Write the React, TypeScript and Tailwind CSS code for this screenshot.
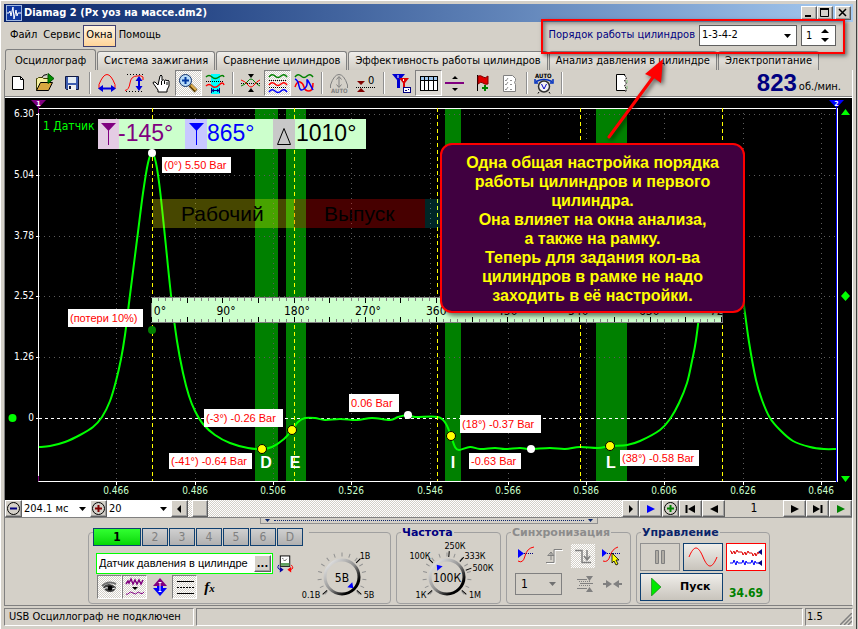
import { useState } from "react";
import type { ReactNode } from "react";
import clsx from "clsx";

const HATCH =
  "bg-[repeating-conic-gradient(#ffffff_0_25%,#d4d0c8_0_50%)] bg-[length:2px_2px]";
const RAISED =
  "border border-t-white border-l-white border-b-[#606060] border-r-[#606060] bg-[#d4d0c8] shadow-[inset_-1px_-1px_0_#a0a0a0]";
const SUNKEN =
  "border border-t-[#808080] border-l-[#808080] border-b-white border-r-white";

// ---------- data ----------

const TABS = [
  "Осциллограф",
  "Система зажигания",
  "Сравнение цилиндров",
  "Эффективность работы цилиндров",
  "Анализ давления в цилиндре",
  "Электропитание",
];

const MENU = ["Файл", "Сервис", "Окна", "Помощь"];

const PRESSURE: [number, number][] = [
  [39, 447], [50, 446], [65, 442], [80, 435], [93, 427], [102, 417], [110, 401], [116, 381],
  [121, 359], [125, 335], [130, 295], [138, 232], [143, 193], [148, 163], [152, 153], [156, 163],
  [160, 190], [165, 237], [171, 295], [177, 341], [183, 373], [189, 396], [195, 411], [203, 424],
  [215, 435], [230, 443], [248, 448], [262, 449], [272, 447], [284, 439], [292, 430], [298, 422],
  [305, 418], [315, 418], [325, 420], [340, 419], [357, 420], [372, 418], [390, 420], [398, 417],
  [408, 415], [415, 417], [438, 417], [446, 424], [451, 436], [455, 447], [459, 450], [470, 447],
  [480, 449], [495, 448], [505, 449], [520, 448], [530, 449], [550, 448], [565, 449], [580, 447],
  [598, 448], [610, 446], [627, 445], [640, 441], [660, 430], [670, 419], [679, 403], [687, 383],
  [692, 361], [696, 340], [701, 300], [709, 236], [718, 163], [722, 153], [726, 163], [736, 237],
  [744, 305], [749, 342], [756, 380], [762, 400], [770, 418], [780, 430], [793, 441], [810, 447],
  [824, 449], [836, 449],
];

const X_TICKS = [
  [116, "0.466"], [195, "0.486"], [273, "0.506"], [351, "0.526"], [430, "0.546"],
  [508, "0.566"], [586, "0.586"], [664, "0.606"], [743, "0.626"], [821, "0.646"],
] as const;

const Y_TICKS = [
  [114, "6.30"], [175, "5.04"], [236, "3.78"], [296, "2.52"], [357, "1.26"], [418, "0"],
] as const;

const BANDS = [[255, 23], [286, 20], [445, 16], [596, 31]];

const NOTES = [
  { x: 162, y: 157, w: 69, h: 16, text: "(0°) 5.50 Bar" },
  { x: 68, y: 309, w: 75, h: 18, text: "(потери 10%)" },
  { x: 204, y: 409, w: 79, h: 18, text: "(-3°) -0.26 Bar" },
  { x: 169, y: 453, w: 83, h: 16, text: "(-41°) -0.64 Bar" },
  { x: 349, y: 394, w: 50, h: 18, text: "0.06 Bar" },
  { x: 460, y: 415, w: 81, h: 18, text: "(18°) -0.37 Bar" },
  { x: 469, y: 453, w: 52, h: 16, text: "-0.63 Bar" },
  { x: 620, y: 450, w: 79, h: 16, text: "(38°) -0.58 Bar" },
];

function smooth(p: [number, number][]) {
  let d = `M${p[0][0]} ${p[0][1]}`;
  for (let i = 0; i < p.length - 1; i++) {
    const a = p[i - 1] ?? p[i];
    const b = p[i];
    const c = p[i + 1];
    const e = p[i + 2] ?? c;
    d += `C${b[0] + (c[0] - a[0]) / 6} ${b[1] + (c[1] - a[1]) / 6} ${c[0] - (e[0] - b[0]) / 6} ${c[1] - (e[1] - b[1]) / 6} ${c[0]} ${c[1]}`;
  }
  return d;
}

// ---------- toolbar ----------

function Tool({ label, mode, children }: { label: string; mode?: "hatch" | "light"; children: ReactNode }) {
  return (
    <button
      aria-label={label}
      className={clsx("h-[26px] w-[27px] shrink-0", mode && SUNKEN, mode === "hatch" && HATCH, mode === "light" && "bg-[#dedbd5]")}
    >
      <svg viewBox="0 0 27 26" className={clsx("block h-[26px] w-[27px]", mode && "-m-px")} fill="none">
        {children}
      </svg>
    </button>
  );
}

function Sep() {
  return (
    <div className="flex w-2 shrink-0 justify-center py-0.5">
      <div className="w-0.5 border-l border-[#909090] bg-white" />
    </div>
  );
}

function Toolbar() {
  return (
    <div className="flex h-[26px] items-stretch">
      <Tool label="Новый">
        <path d="M7.500 6.500h8l3 3v10h-11z" fill="#fff" stroke="#000" />
        <path d="M15.500 6.500v3h3" stroke="#000" />
      </Tool>
      <Tool label="Открыть">
        <path d="M4.500 20.500v-12h1l1-1h4l1 1h6v4" fill="#f4f0a0" stroke="#404000" />
        <path d="M4.500 20.500l4-8h12l-4 8z" fill="#d8a840" stroke="#000" />
        <path d="M16 3.500v10l6-5z" fill="#009000" stroke="#005000" />
        <path d="M10 7.500q1-3 5-3" stroke="#000" />
      </Tool>
      <Tool label="Сохранить">
        <path d="M6.500 6.500h13v13h-12l-1-1z" fill="#3c5cb0" stroke="#101840" />
        <rect x="9" y="7" width="8" height="6" fill="#e4ecf4" />
        <rect x="9" y="15" width="8" height="5" fill="#f0f0f0" />
        <rect x="10" y="16" width="2" height="3" fill="#101840" />
      </Tool>
      <Sep />
      <Tool label="Период">
        <path d="M5 18.500v-4Q9 4.500 13 4.500T21 14.500v4" stroke="#f00" />
        <path d="M7 18.500h12" stroke="#0000e0" strokeWidth="2" />
        <path d="M9 15l-5 3.500L9 22zM17 15l5 3.500L17 22z" fill="#0000e0" />
      </Tool>
      <Tool label="Амплитуда">
        <path d="M6 4.500h17M5 21.500h17" stroke="#000" strokeDasharray="1 2" />
        <path d="M4 20.500Q8 20 9 13T16 6Q20 5 22 7v3" stroke="#f00" />
        <path d="M18 10v7" stroke="#0000e0" strokeWidth="2" />
        <path d="M14.500 11L18 6l3.500 5zM14.500 16L18 21l3.500-5z" fill="#0000e0" />
      </Tool>
      <Tool label="Рука">
        <path
          d="M10 15l-3-3q-2-.5-2 1l5 7v2h9v-2l2-4v-5q-1-1.500-2 0q-.5-2-2.500-.5q-1-1.500-2.500 0V6q-1-2-2 0z"
          fill="#fff"
          stroke="#000"
        />
        <path d="M13.500 11v4M16.500 11v3M19 12v3" stroke="#000" />
      </Tool>
      <Tool label="Лупа" mode="hatch">
        <path d="M15 15l6 6" stroke="#604000" strokeWidth="4" />
        <path d="M16 15l5 5" stroke="#e0b050" strokeWidth="2" />
        <circle cx="10.500" cy="10.500" r="6" fill="#b8dcf8" stroke="#103068" />
        <path d="M7 10.500h7M10.500 7v7" stroke="#0038a0" strokeWidth="2" />
      </Tool>
      <Tool label="Курсоры">
        <rect x="9" y="4" width="9" height="20" fill="#00ffff" />
        <path d="M4 7q3-3 6 0t7 0t5 0" stroke="#008000" strokeWidth="1.500" />
        <path d="M4 11.500h18" stroke="#000" strokeDasharray="1 1" />
        <path d="M4 16q3-3 6 0t7-1t5 0" stroke="#f00" strokeWidth="1.500" />
        <path d="M9.500 18v5M17.500 18v5M10 20.500h7M12 19l-2 1.500l2 1.500M15 19l2 1.500l-2 1.500" stroke="#000080" />
      </Tool>
      <Sep />
      <Tool label="Центр">
        <path d="M4 13.500h19" stroke="#000" strokeDasharray="1 1" />
        <path d="M4 16q4-1 7-5t6 0t6 5" stroke="#008000" />
        <path d="M4 10q4 1 7 5t6 0t6-5" stroke="#f00" />
        <path d="M11 4h6l-3 4zM11 22h6l-3-4z" fill="#000" />
      </Tool>
      <Tool label="Раздельно" mode="hatch">
        <path d="M5 7q3-4 6-1t6 0t6 1" stroke="#008000" strokeWidth="1.500" />
        <path d="M5 10.500h18M5 17.500h18" stroke="#000" strokeDasharray="1 1" />
        <path d="M5 15q3-4 6-1t6 0t6 1" stroke="#f00" strokeWidth="1.500" />
        <path d="M5 22q3-4 6-1t6 0t6 1" stroke="#00f" strokeWidth="1.500" />
      </Tool>
      <Tool label="Вместе">
        <path d="M4 7q3-4 6-1t6 0t6 1" stroke="#008000" strokeWidth="1.500" />
        <path d="M4 17q2-6 5-5t4 5t5 4t4-8" stroke="#f00" strokeWidth="1.500" />
        <path d="M4 9q3 1 4 7t5 3t3-8t6 9" stroke="#00f" strokeWidth="1.500" />
      </Tool>
      <Sep />
      <Tool label="Авто уровень">
        <path d="M4.500 18v-3Q8 4.500 13 4.500T21.500 15v3" stroke="#808080" />
        <path d="M13 7v10M10.500 9.500L13 6.500l2.500 3M10.500 14.500l2.500 3l2.500-3" stroke="#808080" />
        <text x="5" y="23" fontSize="6" fontWeight="700" fill="#808080">AUTO</text>
      </Tool>
      <Tool label="Ноль">
        <path d="M3 17.500h19" stroke="#000" strokeDasharray="1 1" />
        <path d="M4 11h8l-4 4zM4 22h8l-4-4z" fill="#800000" />
        <text x="15" y="14" fontSize="11" fill="#000">0</text>
      </Tool>
      <Sep />
      <Tool label="Фильтры">
        <path d="M4 4h13l-5 6v8h-3v-8z" fill="#0000d0" />
        <path d="M11 8h10l-4 5v6h-2v-6z" fill="#e00000" />
        <path d="M10 5v3M15.500 9v2" stroke="#fff" />
        <rect x="15.500" y="17.500" width="7" height="5" fill="#fff" stroke="#000080" />
        <path d="M17 20.500h2M20 19.500h1" stroke="#000080" />
      </Tool>
      <Tool label="Таблица" mode="light">
        <rect x="5.500" y="6.500" width="17" height="14" fill="#fff" stroke="#000" />
        <rect x="6" y="7" width="16" height="3" fill="#a0c8f0" />
        <path d="M6 10.500h17M9.500 7v14M13.500 7v14M18.500 7v14" stroke="#000" />
      </Tool>
      <Tool label="Линия">
        <path d="M3 13h19" stroke="#800080" strokeWidth="2" />
        <path d="M10 9h6l-3-3zM10 18h6l-3 3z" fill="#000" />
      </Tool>
      <Tool label="Флаг">
        <path d="M8.500 5v16" stroke="#000" />
        <path d="M9 6q3-1 5 1t5-1v8q-3 1-5-1t-5 1z" fill="#e00000" stroke="#800000" />
        <path d="M16 15v6M13 18h6" stroke="#008000" strokeWidth="2" />
      </Tool>
      <Tool label="Отчёт">
        <path d="M7.500 5.500h9l3 3v2l-1 2l1 2v7h-12z" fill="#fff" stroke="#808080" />
        <path d="M9 10l1 1l2-3M9 14l1 1l2-3M9 19l1 1l2-3M14 10.500h2M14 14.500h2M14 19.500h2" stroke="#909090" />
      </Tool>
      <Sep />
      <Tool label="Авто">
        <text x="4" y="8" fontSize="6" fontWeight="700" fill="#000">AUTO</text>
        <path d="M5 11.500q8-4 16 0M4 9v4h3M22 9v4h-3" stroke="#0030c0" strokeWidth="1.500" />
        <circle cx="13" cy="16.500" r="5.500" fill="#f4f4f4" stroke="#303030" strokeWidth="1.500" />
        <path d="M10.500 14l2.500 5l2.500-5" stroke="#0000c0" />
        <path d="M8 22l-1 1.500M18 22l1 1.500" stroke="#000" />
      </Tool>
      <Sep />
      <div className="ml-auto flex items-center pr-[11px]">
        <svg viewBox="0 0 12 20" className="mr-[129px] h-5 w-3" fill="none">
          <path d="M.5 1.500h8l2 3l-2 3l2 3l-2 3l1 2l-1 2h-8z" fill="#fff" />
          <path d="M9 1.500H.500v16H9" stroke="#000" />
          <path d="M8.500 2l2 3l-2 3l2 2l-2 3l2 3l-1 3" stroke="#000" strokeDasharray="2 1" />
          <path d="M11 7v3M11 13v3" stroke="#80c080" />
        </svg>
        <span className="font-['Liberation_Sans'] text-[24px] leading-6 font-bold text-[#000080]">823</span>
        <span className="ml-0.5 pt-2 text-[11px]">об./мин.</span>
      </div>
    </div>
  );
}

// ---------- oscilloscope ----------

function Ruler() {
  const ticks = Array.from({ length: 81 }, (_, i) => i);
  return (
    <g>
      <rect x="151.500" y="297.500" width="571" height="25" fill="#ccffcc" stroke="#808080" />
      {ticks.map((i) => {
        const x = Math.round(151 + i * 7.125) + 0.5;
        const major = i % 5 === 0;
        return (
          <path
            key={i}
            d={`M${x} 298v${major ? 5 : 3}M${x} 322v${major ? -5 : -3}`}
            stroke={major ? "#000" : "#808080"}
          />
        );
      })}
      {Array.from({ length: 9 }, (_, i) => (
        <text key={i} x={i === 0 ? 160 : 155 + i * 71} y="315" fontSize="12" textAnchor="middle" fill="#000">
          {i * 90}°
        </text>
      ))}
    </g>
  );
}

function Cursor({ x, color, n }: { x: number; color: string; n: string }) {
  return (
    <g>
      <path d={`M${x - 7} 100h15l-7.500 8z`} fill={color} />
      <text x={x + 0.5} y="106" fontSize="7" fontWeight="700" textAnchor="middle" fill="#fff">{n}</text>
    </g>
  );
}

function Scope() {
  return (
    <svg viewBox="5 98 847 402" className="block h-auto w-full bg-black" fill="none">
      {BANDS.map(([x, w]) => (
        <rect key={x} x={x} y="109" width={w} height="372" fill="#008000" />
      ))}
      {X_TICKS.map(([x, label]) => (
        <g key={label}>
          <path d={`M${x + 0.5} 113V480`} stroke="#5c5c5c" strokeDasharray="1 4" />
          <path d={`M${x + 0.5} 482v3`} stroke="#fff" />
          <text x={x} y="494" fontSize="10" textAnchor="middle" fill="#ccffcc">{label}</text>
        </g>
      ))}
      {Y_TICKS.map(([y, label]) => (
        <g key={label}>
          {label === "0" ? (
            <path d="M39 418.500H836" stroke="#fff" strokeDasharray="3 3" />
          ) : (
            <path d={`M39 ${y + 0.5}H836`} stroke="#5c5c5c" strokeDasharray="1 4" />
          )}
          <path d={`M36 ${y + 0.5}h3`} stroke="#fff" />
          <text x="34" y={y + 3} fontSize="10" textAnchor="end" fill="#fff">{label}</text>
        </g>
      ))}
      <path d="M38.500 105v376.500H837M39 108.500h798" stroke="#fff" />
      <path d="M38.500 101v12M38.500 476v5" stroke="#800080" />
      <path d={smooth(PRESSURE)} stroke="#00ff00" strokeWidth="2" />
      {[152, 294, 437, 580, 722].map((x) => (
        <path key={x} d={`M${x + 0.5} 108V481`} stroke="#ffff00" strokeDasharray="4 3" />
      ))}

      {/* stroke phases */}
      <rect x="153" y="199" width="141" height="29" fill="#ffff00" fillOpacity="0.28" />
      <rect x="294" y="199" width="131" height="29" fill="#ff0000" fillOpacity="0.28" />
      <rect x="425" y="199" width="60" height="29" fill="#00ffff" fillOpacity="0.15" />
      <g fontSize="21" fill="#000" fontFamily="Liberation Sans, sans-serif">
        <text x="181" y="221">Рабочий</text>
        <text x="324" y="221">Выпуск</text>
      </g>

      <Ruler />

      <g>
        <rect x="98" y="119" width="268" height="30" fill="#ccffcc" />
        <rect x="98" y="119" width="21" height="30" fill="#e4cce4" />
        <rect x="185" y="119" width="22" height="30" fill="#c8c8ff" />
        <rect x="273" y="119" width="22" height="30" fill="#c8c8c8" />
        <path d="M101 123h15l-7.500 8z" fill="#800080" />
        <path d="M108.500 128v17" stroke="#800080" />
        <path d="M189 123h15l-7.500 8z" fill="#0000ff" />
        <path d="M196.500 128v17" stroke="#0000ff" />
        <path d="M277.500 144.500h13l-6.500-16z" stroke="#000" />
        <g fontSize="23" fontFamily="Liberation Sans, sans-serif">
          <text x="118" y="141" fill="#800080">-145°</text>
          <text x="207" y="141" fill="#0000ff">865°</text>
          <text x="296" y="141" fill="#000">1010°</text>
        </g>
      </g>
      <text x="43" y="130" fontSize="12" fill="#00ff00">1 Датчик</text>

      <g fill="#fff" fontSize="16" fontWeight="700" textAnchor="middle" fontFamily="Liberation Sans, sans-serif">
        <text x="266" y="468">D</text>
        <text x="295" y="468">E</text>
        <text x="453" y="468">I</text>
        <text x="611" y="468">L</text>
      </g>
      {NOTES.map((n) => (
        <g key={n.text}>
          <rect x={n.x} y={n.y} width={n.w} height={n.h} fill="#fff" />
          <text x={n.x + 2} y={n.y + n.h / 2 + 4} fontSize="11" fill="#ff0000" fontFamily="Liberation Sans, sans-serif">
            {n.text}
          </text>
        </g>
      ))}
      {[[152, 153], [408, 415], [531, 449]].map(([x, y]) => (
        <circle key={x} cx={x} cy={y} r="4" fill="#fff" />
      ))}
      {[[262, 449], [292, 430], [451, 436], [610, 446]].map(([x, y]) => (
        <circle key={x} cx={x} cy={y} r="4.500" fill="#ffff00" stroke="#000" />
      ))}
      <circle cx="152" cy="330" r="4" fill="#008000" />
      <circle cx="12.500" cy="418" r="4" fill="#00ff00" />

      <Cursor x={38} color="#800080" n="1" />
      <path d="M836.500 108V482" stroke="#0000ff" />
      <path d="M837.500 108V482" stroke="#fff" />
      <Cursor x={836} color="#0000ff" n="2" />
      <path d="M841 115h9l-4.500-6zM841 296l4.500-5 4.500 5-4.500 5zM841 476h9l-4.500 6z" fill="#00ff00" />
    </svg>
  );
}

// ---------- scroll row ----------

function RowButton({ label, wide, children }: { label: string; wide?: boolean; children: ReactNode }) {
  return (
    <button
      aria-label={label}
      className={clsx("flex h-[17px] shrink-0 items-center justify-center", RAISED, wide ? "w-[23px]" : "w-[17px]")}
    >
      <svg viewBox="0 0 15 15" className="h-[15px] w-[15px]" fill="none">
        {children}
      </svg>
    </button>
  );
}

function Combo({ label, value, className }: { label: string; value: string; className: string }) {
  return (
    <div className={clsx("relative h-[17px] shrink-0 bg-white", className)}>
      <select aria-label={label} className="block h-full w-full appearance-none bg-transparent pl-0.5 text-[11px] leading-4 outline-none">
        <option>{value}</option>
      </select>
      <svg viewBox="0 0 7 4" className="pointer-events-none absolute top-[7px] right-1 h-1 w-[7px]">
        <path d="M0 0h7L3.500 4z" fill="#000" />
      </svg>
    </div>
  );
}

function ScrollRow() {
  return (
    <div className="flex h-[17px] items-stretch bg-[#d4d0c8]">
      <RowButton label="Уменьшить">
        <circle cx="7.500" cy="7.500" r="6" stroke="#000" />
        <path d="M4 7.500h7" stroke="#000080" strokeWidth="2" />
      </RowButton>
      <Combo label="Развёртка" value="204.1 мс" className="w-[68px]" />
      <RowButton label="Увеличить">
        <circle cx="7.500" cy="7.500" r="6" stroke="#000" />
        <path d="M4 7.500h7M7.500 4v7" stroke="#800000" strokeWidth="2" />
      </RowButton>
      <Combo label="Шаг" value="20" className="w-16" />
      <div className={clsx("flex min-w-0 flex-1", HATCH)}>
        <RowButton label="Влево">
          <path d="M9 4v8L5 8z" fill="#000" />
        </RowButton>
        <div className={clsx("ml-1 h-[17px] w-4", RAISED)} />
        <div className="flex-1" />
        <RowButton label="Вправо">
          <path d="M6 4v8l4-4z" fill="#000" />
        </RowButton>
      </div>
      <RowButton label="Просмотр" wide>
        <path d="M4 4v8l8-4z" fill="#0000ff" />
      </RowButton>
      <RowButton label="Добавить">
        <circle cx="7.500" cy="7.500" r="6" stroke="#000" />
        <path d="M4 7.500h7M7.500 4v7" stroke="#008000" strokeWidth="2" />
      </RowButton>
      <RowButton label="В начало" wide>
        <path d="M3.500 4v8" stroke="#000" strokeWidth="2" />
        <path d="M12 4v8L5 8z" fill="#000" />
      </RowButton>
      <RowButton label="Назад" wide>
        <path d="M12 4v8L4 8z" fill="#000" />
      </RowButton>
      <span className="w-[58px] text-center text-[12px] leading-[17px]">1</span>
      <RowButton label="Вперёд" wide>
        <path d="M4 4v8l8-4z" fill="#000" />
      </RowButton>
      <RowButton label="В конец" wide>
        <path d="M3 4v8l7-4z" fill="#000" />
        <path d="M11.500 4v8" stroke="#000" strokeWidth="2" />
      </RowButton>
      <RowButton label="Пуск просмотра" wide>
        <path d="M4 4v8l8-4z" fill="#008000" />
      </RowButton>
    </div>
  );
}

// ---------- bottom panels ----------

function Group({ title, tone, className, children }: { title?: string; tone?: string; className: string; children: ReactNode }) {
  return (
    <fieldset className={clsx("relative mt-[7px] h-[72px] shrink-0 rounded-[4px] border border-[#a0a0a0]", className)}>
      {title && (
        <legend className={clsx("absolute -top-[7px] left-1 bg-[#d4d0c8] px-px font-['DejaVu_Sans'] text-[11px] leading-[14px] font-bold", tone)}>
          {title}
        </legend>
      )}
      {children}
    </fieldset>
  );
}

function Knob({ value, pointer, labels, id }: { value: string; pointer: number; id: string; labels: [string, number, number, number][] }) {
  const marked = labels.map((l) => l[3]);
  return (
    <svg viewBox="-48 -39 96 66" className="h-[66px] w-24" fill="none" role="img" aria-label={value}>
      <defs>
        <linearGradient id={id} x1="0" y1="0" x2="1" y2="1">
          <stop offset="0" stopColor="#f4f4f4" />
          <stop offset="0.5" stopColor="#909090" />
          <stop offset="0.8" stopColor="#000" />
        </linearGradient>
      </defs>
      {Array.from({ length: 15 }, (_, i) => (
        <path key={i} d="M20.500 0h4" stroke="#909090" transform={`rotate(${135 + (i * 270) / 14})`} />
      ))}
      {marked.map((a) => (
        <path key={a} d="M20 0h6" stroke="#000" transform={`rotate(${a})`} />
      ))}
      <circle r="17" fill="#d4d0c8" stroke={`url(#${id})`} strokeWidth="3" />
      <path d="M16 0l-5-3.500v7z" fill="#0000ff" transform={`rotate(${pointer})`} />
      <text y="5" fontSize="12" textAnchor="middle" fill="#000">{value}</text>
      {labels.map(([text, x, y]) => (
        <text key={text} x={x} y={y} fontSize="9" textAnchor="middle" fill="#000">{text}</text>
      ))}
    </svg>
  );
}

function ChannelGroup() {
  const [channel, setChannel] = useState("1");
  return (
    <Group className="w-[303px]">
      <div className="absolute -top-[5px] left-1 flex gap-px bg-[#d4d0c8] pr-1.5">
        {["1", "2", "3", "4", "5", "6", "D"].map((c) => (
          <button
            key={c}
            onClick={() => setChannel(c)}
            className={clsx(
              "h-[18px] border border-[#104070] text-center text-[12px] leading-4",
              c === channel
                ? "w-12 bg-gradient-to-b from-[#30ff30] to-[#00d800] font-bold text-black"
                : "w-[26px] bg-gradient-to-b from-[#d0d0d0] to-[#b0b0b0] text-[#808080]",
            )}
          >
            {c}
          </button>
        ))}
      </div>
      <div className="flex pt-5 pl-[7px]">
        <div className="w-[198px]">
          <div className="flex items-center gap-1">
            <div className="flex h-[21px] w-[177px] shrink-0 items-center border border-[#00ff00] bg-white pr-px">
              <input
                aria-label="Название канала"
                defaultValue="Датчик давления в цилиндре"
                className="min-w-0 flex-1 bg-transparent pl-0.5 font-['Liberation_Sans'] text-[11px] outline-none"
              />
              <button className={clsx("h-[17px] w-[17px] text-[11px] leading-[9px] font-bold", RAISED)}>...</button>
            </div>
            <svg viewBox="0 0 18 19" className="h-[19px] w-[18px]" fill="none">
              <rect x="3.500" y="1.500" width="10" height="11" fill="#fff" stroke="#000" />
              <rect x="4" y="9" width="9" height="3" fill="#60a060" />
              <path d="M6 4l2 3l3-3" stroke="#000" strokeDasharray="1 1" />
              <path d="M2 11q-3 4 2 5" stroke="#0000a0" />
              <path d="M3 13v6l4-3z" fill="#0000a0" />
              <path d="M15 11q4 4-1 5" stroke="#f00" />
              <path d="M15 13v6l-4-3z" fill="#f00" />
            </svg>
          </div>
          <div className="mt-px ml-px flex">
            <Small label="Показать" on>
              <path d="M6 12q5-6 13 0q-1 5-6 5t-7-5z" fill="#404040" />
              <path d="M5 11q6-6 14-2" stroke="#707070" strokeWidth="2" />
              <circle cx="13" cy="13" r="2.500" fill="#000" />
              <path d="M7 14q2-2 4-1M15 14l3-1" stroke="#fff" />
            </Small>
            <Small label="Сглаживание" on>
              <path d="M4 9l2-3 1 2 2-4 2 5 2-4 2 4 2-4 2 4 2-4" stroke="#800080" strokeWidth="1.500" />
              <path d="M10 12h6l-3 3z" fill="#000" />
              <path d="M4 19q2 1 3-1t4 0t4 0t3 0t4-1" stroke="#800080" />
            </Small>
            <Small label="Инверсия">
              <path d="M13 3l7 8h-4v2h-6v-2H6z" fill="#800080" />
              <path d="M13 21l7-8h-4v-2h-6v2H6z" fill="#0000ff" />
              <path d="M13 7v10M11.500 7.500h3M11.500 16.500h3" stroke="#fff" />
            </Small>
            <Small label="Линии" on>
              <path d="M5 6.500h17M5 18.500h17" stroke="#000" />
              <path d="M5 12.500h17" stroke="#000" strokeDasharray="2 1" />
            </Small>
            <button className="h-6 w-[25px] text-center font-['Liberation_Serif'] text-[15px] leading-5 font-bold italic">
              f<span className="text-[11px]">x</span>
            </button>
          </div>
        </div>
        <div className="-mt-[15px]">
          <Knob
            id="volt"
            value="5В"
            pointer={45}
            labels={[["1В", 23, -18, -45], ["0.1В", -31, 21, 138], ["5В", 27, 21, 42]]}
          />
        </div>
      </div>
    </Group>
  );
}

function Small({ label, on, children }: { label: string; on?: boolean; children: ReactNode }) {
  return (
    <button aria-label={label} className={clsx("h-6 w-[25px] border", on ? clsx(SUNKEN, HATCH) : "border-transparent")}>
      <svg viewBox="0 0 25 24" className="-m-px block h-6 w-[25px]" fill="none">
        {children}
      </svg>
    </button>
  );
}

function SyncGroup() {
  return (
    <Group title="Синхронизация" tone="text-[#8c8c8c]" className="w-[125px]">
      <div className="flex gap-1 pt-[11px] pl-2">
        <svg viewBox="0 0 24 24" className="h-6 w-6" fill="none">
          <path d="M3 5v9l6-4.500z" fill="#0000ff" />
          <path d="M9 9.500h10" stroke="#000080" strokeDasharray="1 1" />
          <path d="M3 17q5 3 7-5t9-9" stroke="#f00" />
        </svg>
        <svg viewBox="0 0 24 24" className="h-6 w-6" fill="none">
          <path d="M4 19.500h8v-13h8" stroke="#fff" />
          <path d="M3 18.500h8v-13h8" stroke="#808080" />
          <path d="M4.500 12L8 8v8M5 11.500h6M8 8l3 4" stroke="#808080" />
        </svg>
        <svg viewBox="0 0 24 24" className={clsx("h-6 w-6", HATCH)} fill="none">
          <path d="M4 6.500h7v12h9" stroke="#808080" strokeWidth="1.500" />
          <path d="M16 6v10M13 12l3 4l3-4" stroke="#808080" strokeWidth="1.500" />
        </svg>
        <svg viewBox="0 0 24 24" className="h-6 w-6" fill="none">
          <path d="M3 5v8l5-4z" fill="#0000ff" />
          <path d="M8 9.500h13" stroke="#000080" strokeDasharray="1 1" />
          <path d="M4 17q5 2 7-5t8-9" stroke="#f00" />
          <path d="M13 9v10l2-2l2 4l2-1l-2-4h3z" fill="#ffff00" stroke="#000" strokeWidth="0.800" />
        </svg>
      </div>
      <div className="flex items-center gap-2 pt-[5px] pl-2">
        <div className="relative h-[22px] w-[47px] border border-[#808080]">
          <select aria-label="Канал синхронизации" className="block h-full w-full appearance-none bg-transparent pl-[5px] text-[12px] outline-none">
            <option>1</option>
          </select>
          <svg viewBox="0 0 7 4" className="pointer-events-none absolute top-2 right-[5px] h-1 w-[7px]">
            <path d="M0 0h7L3.500 4z" fill="#707070" />
          </svg>
        </div>
        <svg viewBox="0 0 20 18" className="ml-1 h-[18px] w-5" fill="none">
          <path d="M3 4.500h10M6 8.500h13M3 13.500h10" stroke="#808080" />
          <path d="M5 6.500h12M5 10.500h12" stroke="#808080" strokeDasharray="1 1" />
          <path d="M12 1h7l-3.500 5zM12 17h7l-3.500-5z" fill="#808080" />
        </svg>
        <svg viewBox="0 0 20 18" className="h-[18px] w-5" fill="none">
          <path d="M4 5l6 4-6 4zM17 5l-6 4 6 4z" fill="#808080" />
          <path d="M1 9h5M15 9h5" stroke="#808080" strokeWidth="2" />
        </svg>
      </div>
    </Group>
  );
}

const FACE = "bg-gradient-to-b from-[#f0eeea] to-[#c8c4bc]";

function ControlGroup() {
  return (
    <Group title="Управление" tone="text-[#0a246a]" className="w-[134px]">
      <div className="grid grid-cols-[40px_40px_40px] gap-x-[3px] gap-y-0.5 pt-[10px] pl-[3px]">
        <button aria-label="Пауза" className="flex h-7 items-center justify-center border border-[#909090]">
          <svg viewBox="0 0 12 16" className="h-4 w-3" fill="#b0aca4">
            <path d="M1.500 1.500h3v13h-3zM7.500 1.500h3v13h-3z" stroke="#808080" />
          </svg>
        </button>
        <button aria-label="Сигнал" className={clsx("h-7 border border-[#104070]", FACE)}>
          <svg viewBox="0 0 38 26" className="block h-[26px] w-[38px]" fill="none">
            <path d="M5 13C10 1 14 1 19 13S28 25 33 13" stroke="#f00" />
          </svg>
        </button>
        <button aria-label="Самописец" className="h-7 border border-[#f00] bg-white">
          <svg viewBox="0 0 38 26" className="block h-[26px] w-[38px]" fill="none">
            <path d="M3 7h1l1 3 2-3 1 3 2-4 1 2h4l1 3 2-3 1 3 2-4 1 2h3l1 3 2-3 1 3 2-4 1 2" stroke="#e00000" />
            <path d="M3 19h3l1-3 2 5 1-4 1 2h4l1-3 2 5 1-4 1 2h4l1-3 2 5 1-4 1 2h4" stroke="#0000ff" />
            <path d="M35 5v6l-4-3zM35 16v6l-4-3z" fill="#000080" />
          </svg>
        </button>
        <button className={clsx("col-span-2 flex h-7 items-center border border-[#104070] pl-2.5 font-['DejaVu_Sans'] text-[11px] font-bold", FACE)}>
          <svg viewBox="0 0 10 18" className="mr-[19px] h-[18px] w-2.5">
            <path d="M.5 0v18L10 9z" fill="#00e800" stroke="#006000" strokeWidth="0.500" />
          </svg>
          Пуск
        </button>
        <span className="pt-3 text-center text-[12px] leading-4 font-bold text-[#008000]">34.69</span>
      </div>
    </Group>
  );
}

// ---------- header ----------

function TitleBar() {
  return (
    <div className="flex h-[18px] items-center bg-gradient-to-r from-[#0a246a] to-[#a6caf0] px-0.5">
      <svg viewBox="0 0 16 16" className="h-4 w-4" fill="none">
        <rect x=".5" y=".5" width="15" height="15" fill="#1038a0" stroke="#a0b8e0" />
        <path d="M1 8h2l1-2 1 5 2-9 1 12 2-9 1 6 1-3h3" stroke="#fff" />
      </svg>
      <h1 className="ml-0.5 text-[11px] font-bold text-white">Diamag 2 (Px уоз на массе.dm2)</h1>
      <div className="ml-auto flex">
        <button aria-label="Свернуть" className={clsx("h-[14px] w-4", RAISED)}>
          <svg viewBox="0 0 14 12" className="block h-3 w-3.5"><path d="M3 8h6v2H3z" fill="#000" /></svg>
        </button>
        <button aria-label="Развернуть" className={clsx("h-[14px] w-4", RAISED)}>
          <svg viewBox="0 0 14 12" className="block h-3 w-3.5" fill="none">
            <path d="M2.500 2v7.500h8V2M2 2h9" stroke="#000" />
            <path d="M2 2h9" stroke="#000" strokeWidth="2" />
          </svg>
        </button>
        <button aria-label="Закрыть" className={clsx("ml-0.5 h-[14px] w-4", RAISED)}>
          <svg viewBox="0 0 14 12" className="block h-3 w-3.5">
            <path d="M3 2l7 7M10 2l-7 7" stroke="#000" strokeWidth="1.500" />
          </svg>
        </button>
      </div>
    </div>
  );
}

function MenuRow() {
  return (
    <div className="flex h-[27px] items-center pr-[17px] pl-[3px]">
      {MENU.map((m) => (
        <button
          key={m}
          className={clsx(
            "h-[22px] border px-0.5 text-[11px]",
            m === "Окна" ? "border-[#404070] bg-gradient-to-b from-[#fff4e0] to-[#ffd498]" : "border-transparent",
          )}
        >
          {m}
        </button>
      ))}
      <form className="relative ml-auto flex items-center gap-1">
        <label htmlFor="order" className="text-[11px] text-[#000080]">Порядок работы цилиндров</label>
        <div className="relative h-[21px] w-[98px] border border-[#606060] bg-white">
          <select id="order" className="block h-full w-full appearance-none bg-transparent pl-0.5 text-[11px] outline-none">
            <option>1-3-4-2</option>
            <option>1-2-4-3</option>
          </select>
          <svg viewBox="0 0 7 4" className="pointer-events-none absolute top-2 right-[5px] h-1 w-[7px]">
            <path d="M0 0h7L3.500 4z" fill="#000" />
          </svg>
        </div>
        <div className="relative h-[21px] w-[35px] border border-[#606060] bg-white">
          <input aria-label="Первый цилиндр" defaultValue="1" className="block h-full w-full bg-transparent pl-1 text-[11px] outline-none" />
          <svg viewBox="0 0 8 13" className="pointer-events-none absolute top-[3px] right-1.5 h-[13px] w-2">
            <path d="M0 4h8L4 0zM0 9h8l-4 4z" fill="#000" />
          </svg>
        </div>
        <div className="pointer-events-none absolute -top-1.5 -right-[9px] -left-2 z-10 h-[35px] border-2 border-[#f00] shadow-[2px_2px_4px_rgba(0,0,0,0.5),inset_2px_2px_4px_rgba(0,0,0,0.4)]" />
      </form>
    </div>
  );
}

function Tabs() {
  const [tab, setTab] = useState(0);
  return (
    <div role="tablist" className="flex h-[21px] items-end gap-px pl-px">
      {TABS.map((t, i) => (
        <button
          key={t}
          role="tab"
          aria-selected={i === tab}
          onClick={() => setTab(i)}
          className={clsx(
            "shrink-0 rounded-t-[3px] border border-b-0 border-[#808080] text-[11px] whitespace-nowrap",
            i === tab
              ? "h-[21px] bg-[#d4d0c8] px-[9px] leading-[19px]"
              : "h-[19px] bg-gradient-to-b from-[#f0eeea] to-[#d0ccc4] px-1.5 leading-[18px]",
          )}
        >
          {t}
        </button>
      ))}
    </div>
  );
}

// ---------- page ----------

export default function App() {
  return (
    <div className="relative flex w-full bg-[#c8c4bc] font-['DejaVu_Sans_Condensed','DejaVu_Sans',sans-serif] text-black">
      <div className="min-w-0 flex-1 border-r border-b border-[#404040] bg-[#d4d0c8] pt-1 pr-[3px] pb-[3px] pl-1 shadow-[inset_1px_1px_0_#ffffff]">
        <TitleBar />
        <MenuRow />
        <Tabs />
        <div className="border-r border-b border-l border-r-white border-b-[#808080] border-l-[#808080]">
          <Toolbar />
          <div className="border-t border-[#808080] bg-white pt-px">
            <Scope />
          </div>
          <ScrollRow />
          <div className="flex h-2 justify-center border-t border-[#808080]">
            <div className="flex h-1.5 w-[338px] items-center gap-1 border border-t-0 border-[#909090] px-1">
              <svg viewBox="0 0 5 3" className="h-[3px] w-[5px]"><path d="M0 0h5L2.500 3z" fill="#0a246a" /></svg>
              <div className="h-0 flex-1 border-t border-dotted border-[#0a246a]" />
              <svg viewBox="0 0 5 3" className="h-[3px] w-[5px]"><path d="M0 0h5L2.500 3z" fill="#0a246a" /></svg>
            </div>
          </div>
          <div className="flex h-20 gap-[5px] pl-[83px]">
            <ChannelGroup />
            <Group title="Частота" tone="text-[#000080]" className="w-[105px]">
              <div className="flex justify-center pt-[5px] pr-1">
                <Knob
                  id="freq"
                  value="100К"
                  pointer={-130}
                  labels={[
                    ["100К", -27, -18, -135],
                    ["250К", 8, -28, -85],
                    ["333К", 28, -18, -50],
                    ["500К", 36, -6, -20],
                    ["1К", -26, 21, 138],
                    ["1М", 28, 21, 42],
                  ]}
                />
              </div>
            </Group>
            <SyncGroup />
            <ControlGroup />
          </div>
        </div>
        <footer className="mt-0.5 flex h-[18px] gap-0.5 text-[11px] leading-4">
          <div className={clsx("w-[190px] pl-1", SUNKEN)}>USB Осциллограф не подключен</div>
          <div className={clsx("flex-1", SUNKEN)} />
          <div className={clsx("flex w-12 items-end justify-between pl-px", SUNKEN)}>
            1.5
            <svg viewBox="0 0 12 12" className="h-3 w-3">
              <path d="M0 12L12 0M4 12l8-8M8 12l4-4" stroke="#808080" strokeWidth="1.500" />
            </svg>
          </div>
        </footer>
      </div>
      <div className="w-px shrink-0" />

      {/* annotation over the window */}
      <svg
        viewBox="0 0 70 90"
        className="pointer-events-none absolute top-[56px] left-[600px] z-20 h-[90px] w-[70px] drop-shadow-[2px_2px_2px_rgba(0,0,0,0.6)]"
      >
        <path d="M9 81L54 20" stroke="#f00" strokeWidth="3" strokeLinecap="round" />
        <path d="M63 3l-2 24-7-5-9-4z" fill="#f00" />
      </svg>
      <aside className="absolute top-[143px] left-[440px] z-20 w-[305px] rounded-[12px] border-2 border-[#f00] bg-[#400040] pt-2 pb-1.5 text-center font-['Liberation_Sans'] text-[16px] leading-[19px] font-bold text-[#ffff00] shadow-[3px_3px_4px_rgba(0,0,0,0.5)]">
        Одна общая настройка порядка
        <br />
        работы цилиндров и первого
        <br />
        цилиндра.
        <br />
        Она влияет на окна анализа,
        <br />
        а также на рамку.
        <br />
        Теперь для задания кол-ва
        <br />
        цилиндров в рамке не надо
        <br />
        заходить в её настройки.
      </aside>
    </div>
  );
}
